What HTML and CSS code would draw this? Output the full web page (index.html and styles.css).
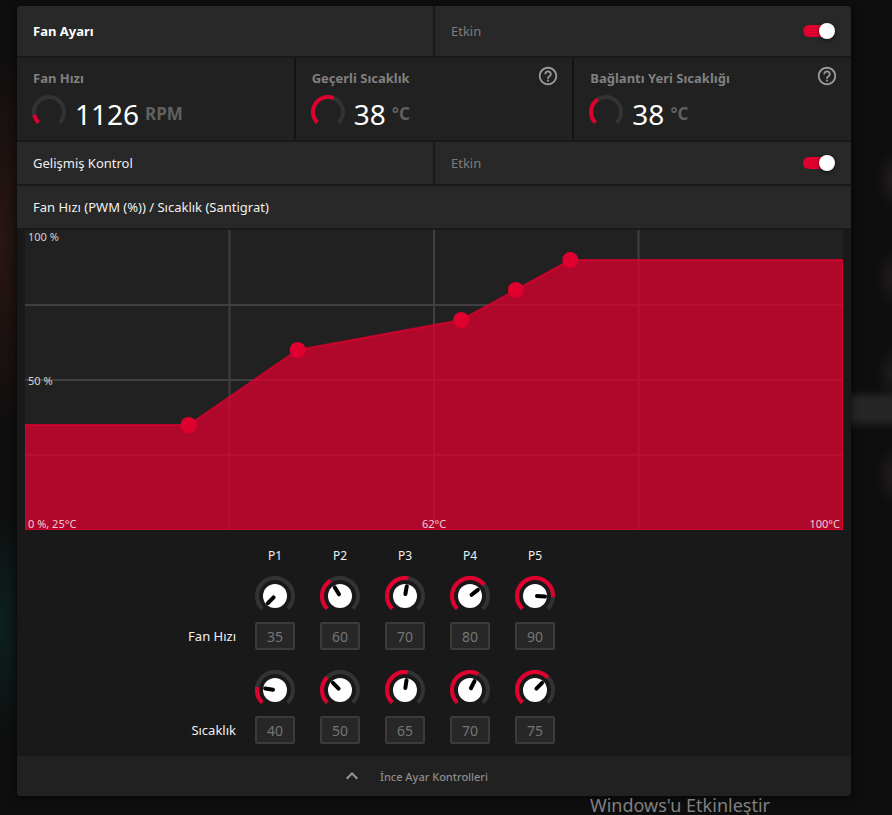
FILE: index.html
```html
<!DOCTYPE html>
<html lang="tr">
<head>
    <meta charset="UTF-8">
    <meta name="viewport" content="width=device-width, initial-scale=1.0">
    <title>Fan Ayarı</title>
    <link rel="stylesheet" href="styles.css">
</head>
<body>
    <main class="panel">
        <div class="row row-header">
            <h1 class="cell title">Fan Ayarı</h1>
            <div class="cell toggle-cell">
                <label for="fanTuning">Etkin</label>
                <input type="checkbox" class="toggle" id="fanTuning" checked>
            </div>
        </div>

        <div class="metrics">
            <section class="metric">
                <h2>Fan Hızı</h2>
                <div class="reading">
                    <svg class="gauge" viewBox="-18 -18 36 36">
                        <path class="track" d="M-10.6 10.6A15 15 0 1 1 10.6 10.6"/>
                        <path class="level" d="M-10.6 10.6A15 15 0 1 1 10.6 10.6" pathLength="270" stroke-dasharray="34 400"/>
                    </svg>
                    <span class="value">1126</span>
                    <span class="unit">RPM</span>
                </div>
            </section>
            <section class="metric">
                <h2>Geçerli Sıcaklık</h2>
                <button class="help" aria-label="Geçerli Sıcaklık yardım">
                    <svg viewBox="0 0 24 24"><path d="M11 18h2v-2h-2v2zm1-16C6.48 2 2 6.48 2 12s4.48 10 10 10 10-4.48 10-10S17.52 2 12 2zm0 18c-4.41 0-8-3.59-8-8s3.59-8 8-8 8 3.59 8 8-3.59 8-8 8zm0-14c-2.21 0-4 1.79-4 4h2c0-1.1.9-2 2-2s2 .9 2 2c0 2-3 1.75-3 5h2c0-2.25 3-2.5 3-5 0-2.21-1.79-4-4-4z"/></svg>
                </button>
                <div class="reading">
                    <svg class="gauge" viewBox="-18 -18 36 36">
                        <path class="track" d="M-10.6 10.6A15 15 0 1 1 10.6 10.6"/>
                        <path class="level" d="M-10.6 10.6A15 15 0 1 1 10.6 10.6" pathLength="270" stroke-dasharray="157 400"/>
                    </svg>
                    <span class="value">38</span>
                    <span class="unit">°C</span>
                </div>
            </section>
            <section class="metric">
                <h2>Bağlantı Yeri Sıcaklığı</h2>
                <button class="help" aria-label="Bağlantı Yeri Sıcaklığı yardım">
                    <svg viewBox="0 0 24 24"><path d="M11 18h2v-2h-2v2zm1-16C6.48 2 2 6.48 2 12s4.48 10 10 10 10-4.48 10-10S17.52 2 12 2zm0 18c-4.41 0-8-3.59-8-8s3.59-8 8-8 8 3.59 8 8-3.59 8-8 8zm0-14c-2.21 0-4 1.79-4 4h2c0-1.1.9-2 2-2s2 .9 2 2c0 2-3 1.75-3 5h2c0-2.25 3-2.5 3-5 0-2.21-1.79-4-4-4z"/></svg>
                </button>
                <div class="reading">
                    <svg class="gauge" viewBox="-18 -18 36 36">
                        <path class="track" d="M-10.6 10.6A15 15 0 1 1 10.6 10.6"/>
                        <path class="level" d="M-10.6 10.6A15 15 0 1 1 10.6 10.6" pathLength="270" stroke-dasharray="102 400"/>
                    </svg>
                    <span class="value">38</span>
                    <span class="unit">°C</span>
                </div>
            </section>
        </div>

        <div class="row">
            <div class="cell">Gelişmiş Kontrol</div>
            <div class="cell toggle-cell">
                <label for="advanced">Etkin</label>
                <input type="checkbox" class="toggle" id="advanced" checked>
            </div>
        </div>

        <div class="row">
            <div class="cell">Fan Hızı (PWM (%)) / Sıcaklık (Santigrat)</div>
        </div>

        <svg class="chart" viewBox="0 0 818 300" role="img" aria-label="Fan Hızı / Sıcaklık">
            <path class="grid" d="M0 75H818M0 150H818M0 225H818M204.5 0V300M409 0V300M613.5 0V300"/>
            <polygon class="area" id="area"/>
            <g class="points" id="points"></g>
            <text x="3" y="11">100 %</text>
            <text x="3" y="155">50 %</text>
            <text x="3" y="298">0 %, 25°C</text>
            <text x="409" y="298" text-anchor="middle">62°C</text>
            <text x="815" y="298" text-anchor="end">100°C</text>
        </svg>

        <div class="controls" id="controls"></div>

        <button class="fine-tune">
            <svg viewBox="0 0 24 24"><path d="M12 8l-6 6 1.41 1.41L12 10.83l4.59 4.58L18 14z"/></svg>
            <span>İnce Ayar Kontrolleri</span>
        </button>
    </main>
    <p class="watermark">Windows'u Etkinleştir</p>

    <script>
        const rows = [
            { id: 'speed', label: 'Fan Hızı', min: 35, max: 100, values: [35, 60, 70, 80, 90] },
            { id: 'temp', label: 'Sıcaklık', min: 25, max: 100, values: [40, 50, 65, 70, 75] }
        ];
        const arc = 'M-12.7 12.7A18 18 0 1 1 12.7 12.7';

        // One knob with its number box, the dial sweeps 270 degrees
        function knob(row, i) {
            const value = row.values[i];
            const sweep = (value - row.min) / (row.max - row.min) * 270;
            const level = sweep > 0 ? `<path class="level" d="${arc}" pathLength="270" stroke-dasharray="${sweep} 400"/>` : '';
            const name = `P${i + 1} ${row.label}`;
            return `<div class="control">
                <div class="knob">
                    <svg viewBox="-20 -20 40 40">
                        <path class="track" d="${arc}"/>${level}
                        <circle class="dial" r="12"/>
                        <path class="pointer" d="M0 -2V-10" transform="rotate(${sweep - 135})"/>
                    </svg>
                    <input type="range" aria-label="${name}" min="${row.min}" max="${row.max}" value="${value}" data-row="${row.id}" data-index="${i}">
                </div>
                <input type="text" class="number" aria-label="${name}" value="${value}" disabled>
            </div>`;
        }

        function drawControls() {
            let html = '<span></span>';
            for (let i = 1; i <= 5; i++) html += `<span class="point-name">P${i}</span>`;
            rows.forEach(row => {
                html += `<span class="row-label">${row.label}</span>`;
                row.values.forEach((v, i) => html += knob(row, i));
            });
            document.getElementById('controls').innerHTML = html;
        }

        function drawCurve() {
            const pts = rows[1].values.map((t, i) => [(t - 25) / 75 * 818, 300 - rows[0].values[i] * 3]);
            const line = [[0, pts[0][1]], ...pts, [818, pts[4][1]], [818, 300], [0, 300]];
            document.getElementById('area').setAttribute('points', line.join(' '));
            document.getElementById('points').innerHTML = pts.map(p => `<circle cx="${p[0]}" cy="${p[1]}" r="8"/>`).join('');
        }

        document.getElementById('controls').addEventListener('change', e => {
            const row = rows.find(r => r.id === e.target.dataset.row);
            if (!row) return;
            row.values[e.target.dataset.index] = Number(e.target.value);
            drawControls();
            drawCurve();
        });

        drawControls();
        drawCurve();
    </script>
</body>
</html>
```
FILE: styles.css
```css
* {
    box-sizing: border-box;
}
body {
    margin: 0;
    padding: 6px 41px 0 17px;
    min-height: 100vh;
    font-family: "Noto Sans", "Open Sans", sans-serif;
    font-size: 13px;
    line-height: 20px;
    color: #f0f0f0;
    background:
        linear-gradient(transparent 390px, #262626 400px, #262626 418px, transparent 430px) right / 41px 100% no-repeat,
        radial-gradient(16px 30px at 100% 180px, #201c1b, transparent),
        radial-gradient(16px 30px at 100% 278px, #201c1b, transparent),
        radial-gradient(16px 30px at 100% 375px, #1c1c1c, transparent),
        radial-gradient(16px 30px at 100% 475px, #201c1b, transparent),
        radial-gradient(40px 200px at 0 240px, #2a1612, transparent),
        radial-gradient(40px 120px at 0 625px, #0d201f, transparent),
        #0e0e0e;
}
h1, h2, p {
    margin: 0;
    font-size: 13px;
}
button {
    border: none;
    background: none;
    padding: 0;
    font-family: inherit;
    cursor: pointer;
}
svg {
    display: block;
    fill: none;
}
.panel {
    display: flex;
    flex-direction: column;
    background: #191919;
    border-radius: 4px;
    overflow: hidden;
    box-shadow: 0 2px 8px rgba(0, 0, 0, 0.6);
}

/* Rows */
.row {
    display: flex;
    gap: 2px;
    min-height: 42px;
    margin-bottom: 2px;
}
.row-header {
    min-height: 50px;
}
.cell {
    flex: 1;
    display: flex;
    align-items: center;
    padding: 0 16px;
    background: #282828;
}
.title {
    color: #fff;
}
.toggle-cell {
    justify-content: space-between;
    color: #7c7c7c;
}
.toggle {
    appearance: none;
    position: relative;
    width: 32px;
    height: 16px;
    margin: 0;
    cursor: pointer;
}
.toggle::before {
    content: "";
    position: absolute;
    inset: 2px 4px 2px 0;
    border-radius: 6px;
    background: #555;
}
.toggle::after {
    content: "";
    position: absolute;
    left: 0;
    top: 0;
    width: 16px;
    height: 16px;
    border-radius: 50%;
    background: #fff;
    box-shadow: 0 1px 4px rgba(0, 0, 0, 0.6);
}
.toggle:checked::before {
    background: #e0002f;
}
.toggle:checked::after {
    left: 16px;
}

/* Metrics */
.metrics {
    display: grid;
    grid-template-columns: repeat(3, 1fr);
    gap: 2px;
    margin-bottom: 2px;
    background: #141414;
}
.metric {
    display: grid;
    grid-template-columns: 1fr auto;
    grid-template-rows: 20px 1fr;
    padding: 10px 13px 4px 16px;
    min-height: 82px;
    background: #212121;
}
.metric h2 {
    color: #808080;
}
.help {
    width: 22px;
    height: 22px;
    margin-top: -3px;
}
.help svg {
    width: 22px;
    height: 22px;
    fill: #9a9a9a;
}
.reading {
    grid-column: 1 / -1;
    display: flex;
    align-items: center;
    margin-left: -2px;
}
.gauge {
    width: 36px;
    height: 36px;
    margin-right: 8px;
}
.track {
    stroke: #333;
    stroke-width: 4;
}
.level {
    stroke: #e0002f;
    stroke-width: 4;
}
.value {
    padding-top: 4px;
    margin-right: 6px;
    font-size: 28px;
    line-height: 40px;
    color: #fff;
}
.unit {
    padding-top: 4px;
    font-size: 17px;
    font-weight: bold;
    color: #606060;
}

/* Chart */
.chart {
    margin: 0 8px;
    background: #212121;
}
.chart text {
    font-size: 11px;
    fill: rgba(255, 255, 255, 0.8);
}
.grid {
    stroke: #404040;
    stroke-width: 2;
}
.area {
    fill: rgba(224, 0, 47, 0.75);
    stroke: rgba(224, 0, 47, 0.75);
    stroke-width: 2;
}
.points {
    fill: #e0002f;
}

/* Controls */
.controls {
    display: grid;
    grid-template-columns: 238px repeat(5, 65px);
    row-gap: 20px;
    padding: 16px 0 12px;
}
.point-name {
    width: 40px;
    margin-bottom: -10px;
    font-size: 12px;
    text-align: center;
}
.row-label {
    align-self: end;
    padding-right: 19px;
    line-height: 28px;
    text-align: right;
}
.control {
    width: 40px;
}
.knob {
    position: relative;
    height: 46px;
}
.knob svg {
    width: 40px;
    height: 40px;
}
.knob input {
    position: absolute;
    inset: 0;
    width: 100%;
    margin: 0;
    opacity: 0;
    cursor: pointer;
}
.dial {
    fill: #fff;
}
.pointer {
    stroke: #000;
    stroke-width: 4;
    stroke-linecap: round;
}
.number {
    display: block;
    width: 40px;
    height: 28px;
    padding: 0;
    border: 2px solid #3b3b3b;
    border-radius: 2px;
    background: #272727;
    color: #757575;
    font-family: inherit;
    font-size: 14px;
    text-align: center;
}

/* Footer */
.fine-tune {
    display: grid;
    grid-template-columns: 1fr auto 1fr;
    align-items: center;
    gap: 16px;
    height: 40px;
    background: #212121;
    color: #8c8c8c;
    font-size: 11px;
    font-weight: 500;
}
.fine-tune svg {
    justify-self: end;
    width: 24px;
    height: 24px;
    fill: #9a9a9a;
}
.watermark {
    padding-right: 81px;
    font-size: 18px;
    font-weight: normal;
    line-height: 18px;
    text-align: right;
    color: #808080;
}
```
